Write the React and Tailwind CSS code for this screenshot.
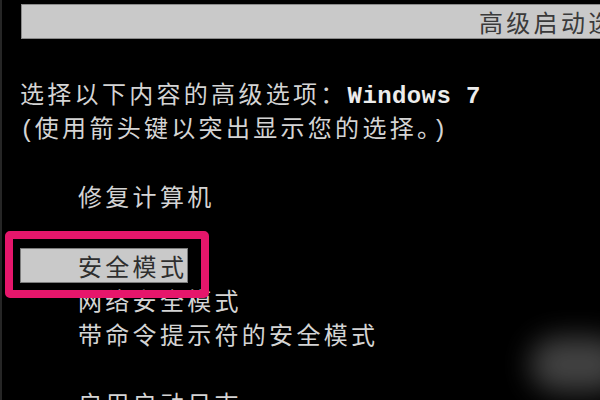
import React from 'react';

const cjk = "font-['Noto_Sans_CJK_SC',sans-serif] tracking-[3.3px]";
const mono = "font-['Liberation_Mono',monospace] tracking-[0.4px] leading-none";
const row = "h-[34.5px] leading-[34.5px]";

const BootMenu = () => {
    return (
        <div className="relative w-[600px] h-[400px] overflow-hidden bg-black border-l-2 border-[#262626] text-[24px] leading-[34.5px] text-[#d4d4d4] whitespace-nowrap">
            {/* title bar */}
            <div className="pt-[4px] pl-[19px]">
                <div className={`h-[35px] -mr-6 bg-[#c9c9c9] border border-[#8a8a8a] pl-[457px] leading-[33px] text-[#3a3a3a] ${cjk}`}>
                    高级启动选项
                </div>
            </div>

            <div className={`mt-[36.75px] pl-[18px] ${cjk}`}>
                <div className={row}>
                    选择以下内容的高级选项：
                    <span className={`${mono} font-bold text-[#ececec]`}>Windows 7</span>
                </div>
                <div className={row}>
                    <span className={mono}>(</span>使用箭头键以突出显示您的选择。<span className={mono}>)</span>
                </div>
                <div className={row}></div>

                <div className={`${row} pl-[58px]`}>修复计算机</div>
                <div className={row}></div>

                {/* selected option */}
                <div className={row}>
                    <div className="relative inline-block align-top">
                        <div className="h-[35px] -mt-[0.5px] pl-[57px] bg-[#c9c9c9] border border-[#7c7c7c] leading-[33px] text-[#2e2e2e]">
                            安全模式
                        </div>
                        <div className="absolute -left-[15px] -top-[17px] -right-[21px] -bottom-[15px] border-[8px] border-[#e6166b] rounded-[5px] z-10"></div>
                    </div>
                </div>
                <div className={`${row} pl-[58px]`}>网络安全模式</div>
                <div className={`${row} pl-[58px]`}>带命令提示符的安全模式</div>
                <div className={row}></div>
                <div className={`${row} pl-[58px]`}>启用启动日志</div>
            </div>

            {/* blurred watermark */}
            <div className="absolute right-[-25px] bottom-[8px] w-[95px] h-[55px] rounded-full bg-[#5e5e5e] blur-[14px] opacity-70"></div>
        </div>
    );
};

export default function App() {
    return <BootMenu />;
}
